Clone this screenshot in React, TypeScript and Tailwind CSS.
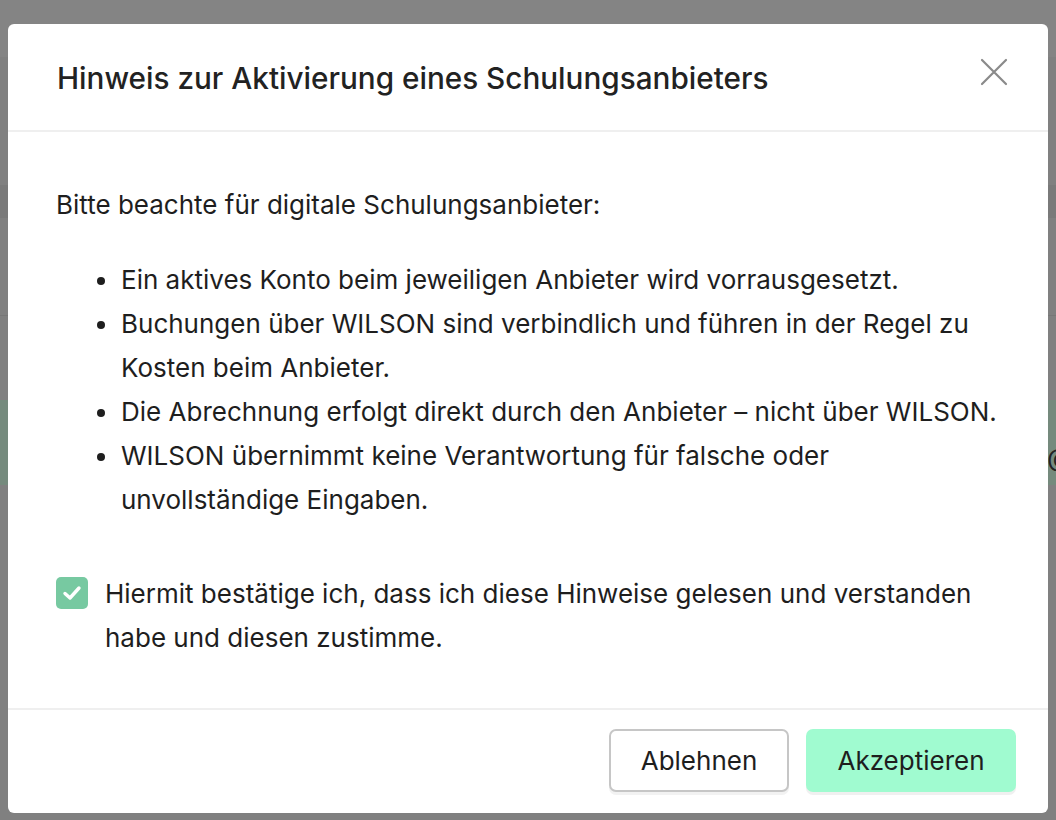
import React from "react";

export default function App() {
  const items: string[] = [
    "Ein aktives Konto beim jeweiligen Anbieter wird vorrausgesetzt.",
    "Buchungen über WILSON sind verbindlich und führen in der Regel zu Kosten beim Anbieter.",
    "Die Abrechnung erfolgt direkt durch den Anbieter – nicht über WILSON.",
    "WILSON übernimmt keine Verantwortung für falsche oder unvollständige Eingaben.",
  ];
  return (
    <div
      className="relative w-[1056px] h-[820px] overflow-hidden bg-[#808080]"
      style={{ fontFamily: "Inter, 'Noto Sans', sans-serif" }}
    >
      {/* faint underlying page bands */}
      <div className="absolute left-0 top-0 w-full h-[57px] bg-[#848484]" />
      <div className="absolute left-0 top-[185px] w-full h-[33px] bg-[#7a7a7a]" />
      <div className="absolute left-0 top-[315px] w-full h-[1px] bg-[#777777]" />
      <div className="absolute left-0 top-[400px] w-full h-[85px] bg-[#758a7d]" />
      <div className="absolute left-[1047px] top-[445px] w-[9px] overflow-hidden text-[26px] text-[#222] leading-none">@</div>

      {/* modal */}
      <div className="absolute left-[8px] top-[24px] w-[1040px] h-[789px] bg-white rounded-[6px] flex flex-col">
        <div className="h-[108px] border-b-2 border-[#efefef] flex items-center justify-between pl-[49px] pr-[40px] pt-[2px] shrink-0">
          <div className="text-[29.7px] font-medium text-[#222222]">
            Hinweis zur Aktivierung eines Schulungsanbieters
          </div>
          <svg width="28" height="28" viewBox="0 0 28 28" className="mt-[-12px]">
            <path d="M2 2 L26 26 M26 2 L2 26" stroke="#8a8a8a" strokeWidth="2.2" strokeLinecap="round" />
          </svg>
        </div>

        <div className="flex-1 pl-[48px] pr-[40px] pt-[51px] text-[26px] leading-[44px] text-[#1e1e1e]">
          <p>Bitte beachte für digitale Schulungsanbieter:</p>
          <ul className="mt-[31px] pl-[41px]">
            {items.map((t, i) => (
              <li key={i} className="flex">
                <div className="w-[24px] shrink-0 pt-[19px]">
                  <div className="w-[8px] h-[8px] rounded-full bg-[#1e1e1e]" />
                </div>
                <span>{t}</span>
              </li>
            ))}
          </ul>
          <div className="mt-[50px] flex">
            <div className="w-[49px] shrink-0 pt-[5px]">
              <div className="w-[32px] h-[32px] rounded-[5px] bg-[#77c9a1] flex items-center justify-center">
                <svg width="22" height="22" viewBox="0 0 22 22">
                  <path d="M4 11.5 L9 16 L18 6" fill="none" stroke="white" strokeWidth="3.4" strokeLinecap="round" strokeLinejoin="round" />
                </svg>
              </div>
            </div>
            <span>Hiermit bestätige ich, dass ich diese Hinweise gelesen und verstanden habe und diesen zustimme.</span>
          </div>
        </div>

        <div className="border-t-2 border-[#efefef] h-[105px] shrink-0 flex items-center justify-end gap-[17px] pr-[32px] pb-[2px]">
          <button className="w-[180px] h-[63px] rounded-[7px] border-2 border-[#c6c6c6] bg-white text-[26px] text-[#1e1e1e] shadow-[0_3px_0_#f2f2f2]">
            Ablehnen
          </button>
          <button className="w-[210px] h-[63px] rounded-[7px] bg-[#a0fbd0] text-[26px] text-[#1e1e1e] shadow-[0_3px_0_#f0f0f0]">
            Akzeptieren
          </button>
        </div>
      </div>
    </div>
  );
}
